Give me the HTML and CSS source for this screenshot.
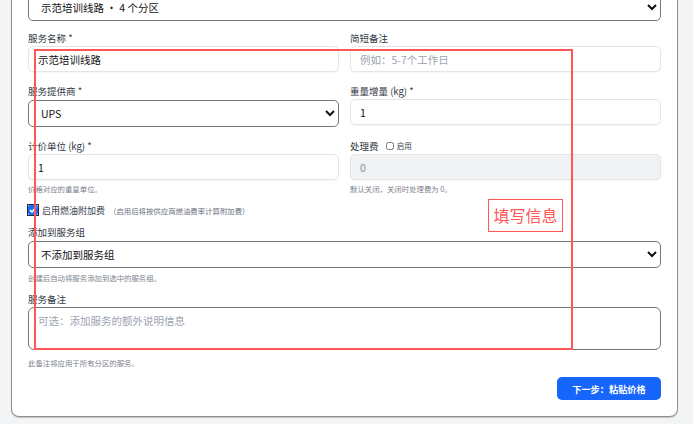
FILE: index.html
```html
<!DOCTYPE html>
<html>
<head>
<meta name="viewport" content="width=device-width, initial-scale=1">
<link rel="stylesheet" href="styles.css">
</head>
<body>

<div class="card">
  <select class="top-select">
    <option>示范培训线路 · 4 个分区</option>
  </select>

  <div class="grid">
    <div class="field">
      <label for="sname">服务名称 *</label>
      <input type="text" id="sname" value="示范培训线路">
    </div>
    <div class="field">
      <label for="memo">简短备注</label>
      <input type="text" id="memo" placeholder="例如：5-7个工作日">
    </div>
    <div class="field">
      <label for="carrier">服务提供商 *</label>
      <select id="carrier"><option>UPS</option></select>
    </div>
    <div class="field">
      <label for="step">重量增量 (kg) *</label>
      <input type="text" id="step" value="1">
    </div>
    <div class="field">
      <label for="unit">计价单位 (kg) *</label>
      <input type="text" id="unit" value="1">
      <div class="help">价格对应的重量单位。</div>
    </div>
    <div class="field">
      <label class="fee-label">处理费 <span class="mini-check"><input type="checkbox"> 启用</span></label>
      <input type="text" value="0" disabled>
      <div class="help">默认关闭，关闭时处理费为 0。</div>
    </div>
  </div>

  <div class="check-row">
    <input type="checkbox" id="fuel" checked>
    <label for="fuel">启用燃油附加费</label>
    <span class="hint">（启用后将按供应商燃油费率计算附加费）</span>
  </div>

  <div class="field block">
    <label for="group">添加到服务组</label>
    <select id="group" class="tall"><option>不添加到服务组</option></select>
    <div class="help">创建后自动将服务添加到选中的服务组。</div>
  </div>

  <div class="field block">
    <label for="notes">服务备注</label>
    <textarea id="notes" placeholder="可选：添加服务的额外说明信息"></textarea>
    <div class="help note-help">此备注将应用于所有分区的服务。</div>
  </div>

  <div class="actions">
    <button type="button" class="next-btn">下一步：粘贴价格</button>
  </div>
</div>

<!-- annotation overlay -->
<div class="mark-box"></div>
<div class="mark-label">填写信息</div>

</body>
</html>
```

FILE: styles.css
```css
body {
  margin: 0;
  background: #f3f4f6;
  font-family: "Noto Sans CJK SC", "Noto Sans", sans-serif;
  color: #212529;
  position: relative;
  height: 424px;
  overflow: hidden;
}

.card {
  margin: -23px 15px 0 11px;
  padding: 16px 16px 16px 16px;
  background: #fff;
  border: 1px solid #8e8e8e;
  border-radius: 8px;
  box-shadow: 0 1px 1px rgba(0,0,0,0.2);
}

select {
  width: 100%;
  height: 27px;
  padding: 0 8px;
  font-family: inherit;
  font-size: 10.5px;
  color: #111;
  background: #fff;
  border: 1px solid #767676;
  border-radius: 5px;
  box-sizing: border-box;
}

.top-select {
  display: block;
}

.grid {
  display: grid;
  grid-template-columns: 1fr 1fr;
  column-gap: 11px;
  row-gap: 12px;
  margin-top: 10px;
}

.field label {
  display: block;
  font-size: 9.5px;
  line-height: 14px;
  color: #2f3742;
  margin-bottom: 1px;
}

.field input[type=text] {
  display: block;
  width: 100%;
  height: 26px;
  padding: 0 9px;
  font-family: inherit;
  font-size: 10.5px;
  color: #111;
  border: 1px solid #e3e5e8;
  border-radius: 5px;
  box-shadow: 0 1px 1px rgba(0,0,0,0.04);
  box-sizing: border-box;
  outline: none;
}

.field input::placeholder,
textarea::placeholder {
  color: #9ca3af;
}

.field input[disabled] {
  background: #f1f2f4;
  color: #8a8f98;
}

.fee-label {
  display: flex;
  align-items: center;
}

.mini-check {
  display: inline-flex;
  align-items: center;
  margin-left: 5px;
  font-size: 7.5px;
  color: #374151;
}

.mini-check input {
  width: 8px;
  height: 8px;
  margin: 0 3px 0 0;
}

.help {
  margin-top: 3px;
  font-size: 7.4px;
  line-height: 11px;
  color: #7c828c;
}

.check-row {
  display: flex;
  align-items: center;
  height: 12px;
  margin-top: 10px;
}

.check-row input {
  width: 10px;
  height: 10px;
  margin: 0 4px 0 0;
  accent-color: #1a6cf5;
  outline: 1px solid #1f2937;
  outline-offset: 0;
}

.check-row label {
  font-size: 9px;
  color: #374151;
}

.check-row .hint {
  margin-left: 4px;
  font-size: 7.4px;
  color: #6b7280;
}

.field.block {
  margin-top: 9px;
}

textarea {
  display: block;
  width: 100%;
  height: 43px;
  padding: 5px 9px;
  font-family: inherit;
  font-size: 10.5px;
  border: 1px solid #767676;
  border-radius: 6px;
  box-sizing: border-box;
  resize: none;
}

.field.block .help {
  margin-top: 4px;
}

.field.block .note-help {
  margin-top: 7px;
}

.actions {
  display: flex;
  justify-content: flex-end;
  margin-top: 9px;
}

.next-btn {
  width: 104px;
  height: 23px;
  background: #1766fb;
  color: #fff;
  font-family: inherit;
  font-size: 9.2px;
  font-weight: bold;
  border: none;
  border-radius: 5px;
}

.mark-box {
  position: absolute;
  left: 34px;
  top: 49px;
  width: 535px;
  height: 297px;
  border: 2px solid #ff5656;
}

.mark-label {
  position: absolute;
  left: 488px;
  top: 199px;
  width: 73px;
  height: 31px;
  border: 1px solid #ff5656;
  background: #fff;
  color: #ff5656;
  font-size: 16px;
  line-height: 31px;
  text-align: center;
}
```
